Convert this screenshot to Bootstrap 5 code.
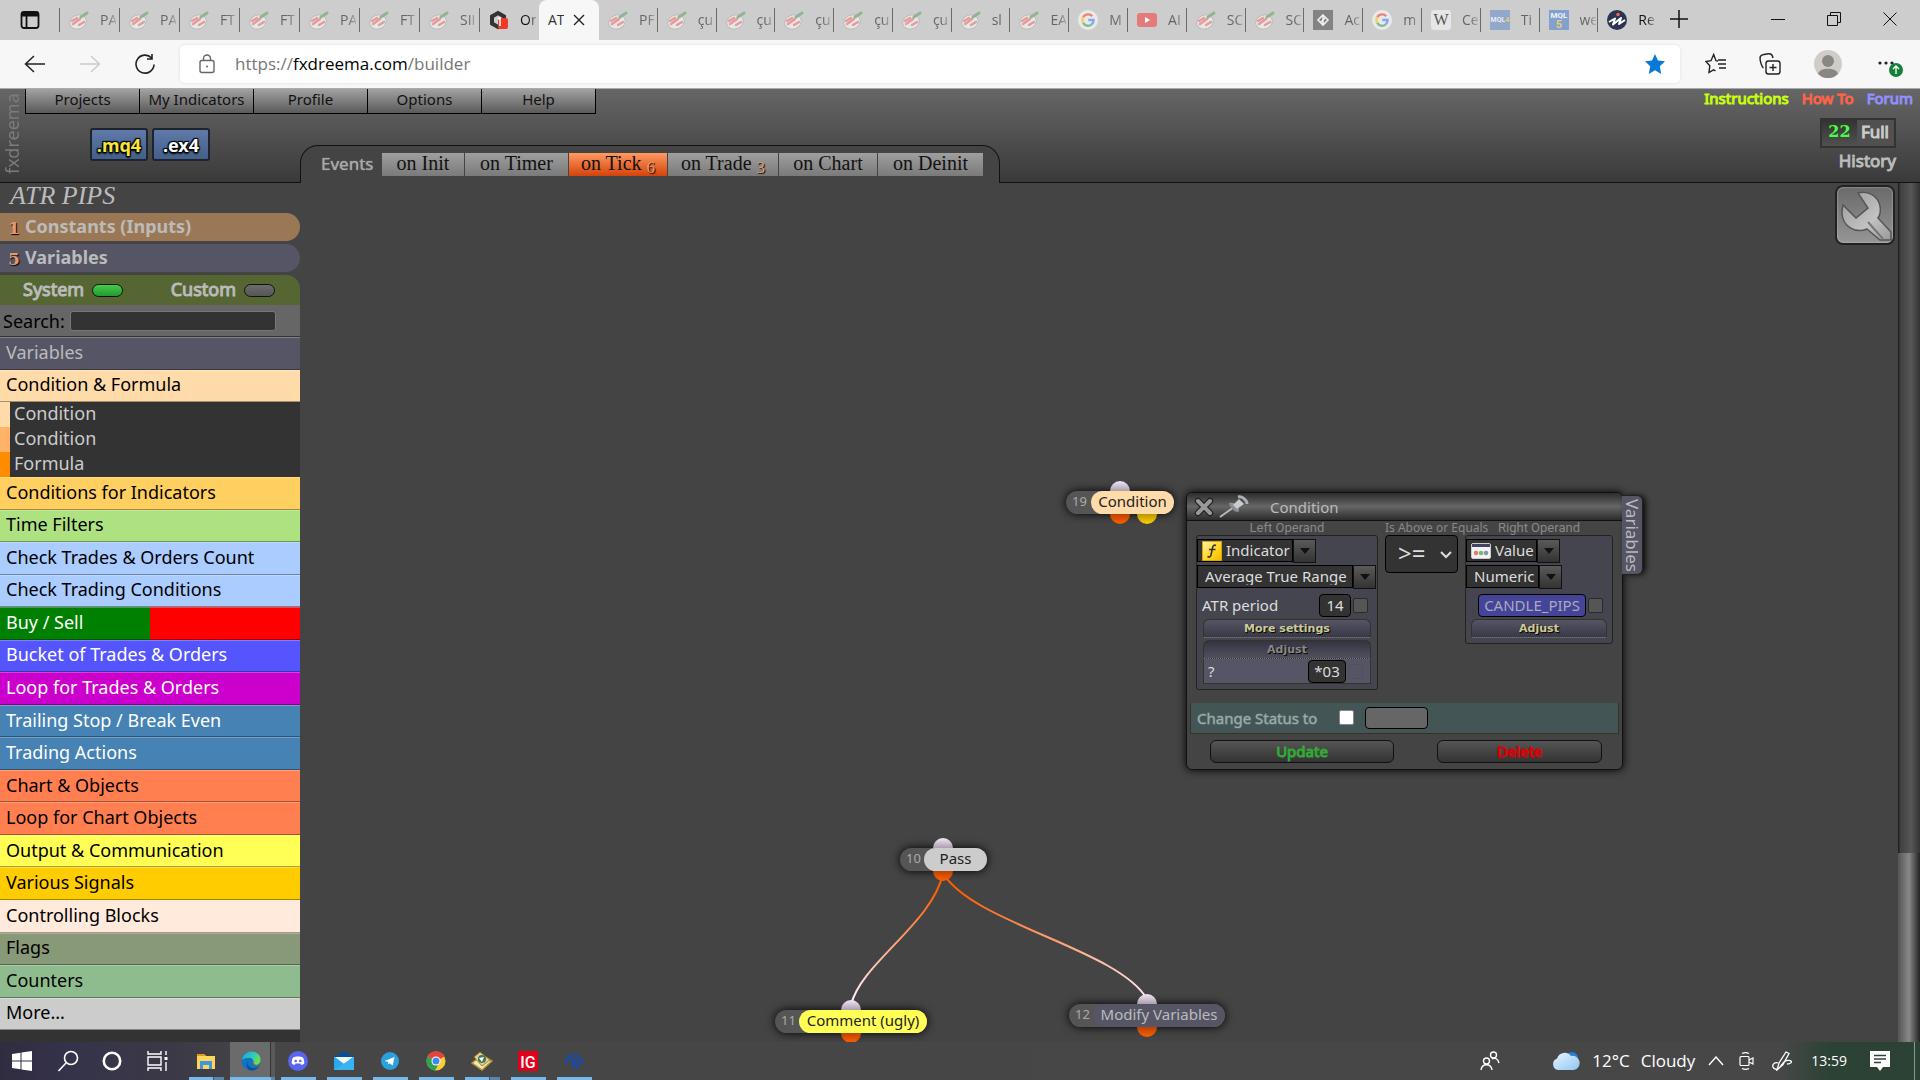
<!DOCTYPE html>
<html lang="en">
<head>
<meta charset="utf-8">
<meta name="viewport" content="width=device-width, initial-scale=1">
<title>fxDreema builder</title>
<link href="https://cdn.jsdelivr.net/npm/bootstrap@5.3.0/dist/css/bootstrap.min.css" rel="stylesheet">
<style>
  body { font-family: "Noto Sans", sans-serif; font-size: 15px; line-height: 20px; background: #444; color: #ccc; }
  a { color: inherit; text-decoration: none; }
  button, input, select { font-family: inherit; }
  svg { flex: none; display: block; }
  .heavy { -webkit-text-stroke: 1px currentColor; }

  /* browser tabs */
  .strip { height: 40px; background: #cdcdcd; }
  .strip-lead { width: 59px; padding-left: 20px; }
  .btab { position: relative; min-width: 0; padding-left: 9px; gap: 11px; height: 24px; border-left: 1px solid #6b6b6b; font-family: "Open Sans", sans-serif; font-size: 14px; color: #666; }
  .btab span { width: 16px; overflow: hidden; white-space: nowrap; -webkit-mask-image: linear-gradient(90deg, #000 50%, rgba(0,0,0,.3)); }
  .btab.dark-txt { color: #111; }
  .pinned .btab { width: 60px; }
  .btab-live { width: 60px; height: 40px; padding-left: 9px; gap: 9px; background: #f7f7f7; border-radius: 8px 8px 0 0; font-family: "Open Sans", sans-serif; font-size: 14px; color: #333; }
  .btab-live span { width: 16px; overflow: hidden; white-space: nowrap; }
  .plain { background: none; border: 0; padding: 0; color: inherit; display: block; }
  .strip-tail { width: 264px; padding: 0 23px 2px 14px; color: #111; }
  .win-ctl { gap: 42px; }

  /* address row */
  .addr { height: 49px; background: #f7f7f7; border-bottom: 1px solid #aaa; padding-left: 24px; }
  .addr-nav { width: 156px; gap: 33px; color: #222; }
  .addr-box { height: 38px; background: #fff; border-radius: 5px; box-shadow: 0 0 3px #ddd; padding: 0 14px 0 18px; }
  .addr-url { font-family: "Open Sans", sans-serif; font-size: 17px; color: #767676; margin-left: 19px; }
  .addr-url b { font-weight: 400; color: #000; }
  .addr-tools { width: 240px; padding: 0 16px 0 25px; color: #222; }

  /* application header */
  .app-head { height: 94px; background: linear-gradient(#666, #3a3a3a); border-bottom: 1px solid #111; }
  .brand-v { writing-mode: vertical-rl; transform: rotate(180deg); width: 25px; height: 85px; font-size: 18px; line-height: 25px; color: #7b7b7b; }
  .menu-a { width: 114px; height: 25px; line-height: 20px; text-align: center; color: #111; background: linear-gradient(#a2a2a2, #5a5a5a); border-right: 1px solid #000; border-bottom: 1px solid #000; }
  .menu-row { border-left: 1px solid #000; margin-right: -1px; }
  .dl-zone { width: 275px; padding: 14px 0 0 65px; }
  .dl-btn { width: 58px; height: 33px; border: 2px solid #1d2430; border-radius: 3px; background: linear-gradient(#6079a9, #426089); font-weight: 700; font-size: 18px; line-height: 28px; padding: 0; color: #fff;
            text-shadow: 1px 1px 1px #000, -1px -1px 1px #000, 1px -1px 1px #000, -1px 1px 1px #000, 0 2px 2px #000; }
  .dl-btn.yel { color: #f7e43c; }
  .ev-bar { width: 700px; height: 38px; margin-bottom: -1px; background: #444; border: 1px solid #111; border-bottom: 0; border-radius: 18px 18px 0 0; padding: 7px 0 0 20px; }
  .ev-name { width: 61px; font-size: 17px; line-height: 21px; color: #aaa; text-shadow: 0 0 1px #aaa; }
  .ev-tab { height: 23px; margin-right: 1px; background: linear-gradient(#9f9f9f, #7a7a7a); color: #111; font-family: "Liberation Serif", serif; font-size: 20px; line-height: 21px; white-space: nowrap; text-align: center; }
  .ev-tab.live { background: linear-gradient(#ff9a62, #d4430a); }
  .ev-tab sub { font-size: 17px; color: #e09a70; text-shadow: 1px 1px 1px #000; bottom: -3px; line-height: 0; }
  .ev-init { width: 82px; } .ev-timer { width: 103px; } .ev-tick { width: 98px; } .ev-trade { width: 110px; } .ev-chart { width: 98px; } .ev-deinit { width: 105px; }
  .top-links { gap: 13px; font-size: 15px; line-height: 18px; padding-right: 7px; }
  .lk-lime { color: #c6ff10; } .lk-red { color: #ff6347; } .lk-blue { color: #9090ff; }
  .full-box { border: 2px solid #333; background: #505050; height: 30px; font-size: 17px; line-height: 23px; color: #ccc; }
  .full-box b { width: 35px; text-align: center; background: linear-gradient(#333, #505050); color: #4f4; font-family: "DejaVu Serif", serif; font-size: 16px; }
  .full-box span { padding: 0 5px 0 4px; }
  .hist { font-size: 17px; color: #bbb; line-height: 24px; padding-top: 1px; }

  /* block library */
  .side { width: 300px; background: #333; }
  .proj { height: 30px; background: #444; font-family: "Liberation Serif", serif; font-style: italic; font-size: 26px; line-height: 26px; color: #bbb; padding-left: 10px; }
  .side-gap { background: #444; padding-bottom: 3px; }
  .pill-row { height: 28px; border-radius: 0 14px 14px 0; font-weight: 700; font-size: 18px; line-height: 27px; color: #bbb; padding-left: 8px; gap: 6px; }
  .pill-row i { font: 700 17px/30px "DejaVu Serif", serif; width: 11px; color: #e09a70; text-shadow: 1px 1px 1px #000; }
  .bg-const { background: #9b7855; } .bg-var { background: #555566; }
  .lib-tabs { height: 30px; background: #556633; border-radius: 0 14px 0 0; padding: 0 25px 2px 23px; font-size: 18px; color: #bbb; }
  .lamp { width: 31px; height: 13px; margin: 3px 0 0 8px; border: 1px solid #111; border-radius: 7px; background: linear-gradient(#6c6c6c, #555); }
  .lamp.on { background: linear-gradient(#4c4, #293); }
  .find { height: 32px; background: #666; border-bottom: 1px solid #333; padding: 0 24px 0 3px; font-size: 18px; color: #000; gap: 5px; }
  .find input { height: 20px; border: 1px solid #777; border-radius: 3px; background: #333; color: #ccc; min-width: 0; }
  .lib-a { flex: 1 1 0; min-height: 0; display: flex; align-items: center; padding: 0 6px 3px; font-size: 18px; line-height: 24px; color: #000; border-bottom: 1px solid rgba(0,0,0,.35); border-top: 1px solid rgba(255,255,255,.25); }
  .lib-a.w { color: #fff; }
  .lib-s { height: 25px; line-height: 22px; font-size: 18px; color: #ccc; border-left: 10px solid; padding-left: 4px; }
  .s1 { border-color: #ffdbaa; } .s2 { border-color: #ffb366; } .s3 { border-color: #ff8c00; }
  .side-foot { height: 12px; }

  /* canvas */
  .board { background: #444; overflow: hidden; min-width: 0; }
  .wires { position: absolute; left: 0; top: 0; }
  .tool-btn { position: absolute; right: 25px; top: 2px; width: 60px; height: 60px; border: 2px solid #222; border-radius: 8px; padding: 0; background: linear-gradient(#6a6a6a, #969696); box-shadow: inset 0 0 2px #ccc; }
  .vbar { position: absolute; right: 0; top: 0; bottom: 0; width: 22px; background: linear-gradient(90deg, #222 0 1px, #404040 2px, #575757 60%, #333); }
  .vbar i { position: absolute; left: 0; right: 0; top: 670px; bottom: 0; background: linear-gradient(90deg, #555, #888 50%, #222); }
  .node { position: absolute; height: 23px; border-radius: 12px; background: #555; box-shadow: 0 0 10px #000; padding-left: 6px; line-height: 21px; font-size: 13px; color: #aaa; }
  .node b { position: relative; font-weight: 400; font-size: 15px; height: 23px; margin-left: 4px; border-radius: 12px; background: #ccc; color: #222; text-align: center; }
  .node span { width: 14px; }
  .port { position: absolute; width: 20px; height: 10px; }
  .port.in { top: -10px; border-radius: 10px 10px 0 0; background: linear-gradient(#f4e4f8, #a9a0ac); }
  .port.out { bottom: -10px; border-radius: 0 0 10px 10px; background: linear-gradient(#b84300, #ff5f00); }
  .port.alt { background: linear-gradient(#b89600, #ffd000); }
  #n19 { left: 766px; top: 308px; } #n19 b { width: 83px; margin-left: 5px; background: #ffdbaa; } #n19 .port { left: 44px; } #n19 .alt { left: 71px; }
  #n10 { left: 600px; top: 665px; } #n10 b { width: 63px; } #n10 .port { left: 33px; }
  #n11 { left: 475px; top: 827px; } #n11 b { width: 128px; background: #ffff55; } #n11 .port { left: 66px; }
  #n12 { left: 769px; top: 821px; } #n12 b { width: 132px; background: #555566; color: #bbb; } #n12 .port { left: 68px; }

  /* block settings window */
  .dlg { position: absolute; left: 886px; top: 309px; width: 437px; background: #444; border: 1px solid #111; border-radius: 6px; box-shadow: 0 0 8px #000; }
  .dlg-head { height: 28px; border-bottom: 1px solid #111; border-radius: 6px 6px 0 0; background: linear-gradient(#2c2c2c, #666 50%, #2c2c2c); padding-left: 7px; }
  .dlg-title { margin-left: 20px; color: #bbb; }
  .dlg-tab { position: absolute; left: 435px; top: 2px; width: 21px; height: 80px; border: 1px solid #222; border-left: 0; border-radius: 0 6px 6px 0; background: #555566; box-shadow: 3px 0 6px -1px #000; writing-mode: vertical-rl; font-size: 17px; line-height: 18px; color: #bbb; padding: 0; text-align: center; }
  .dlg-cols { padding: 0 9px; }
  .cap { font-size: 12px; line-height: 14px; height: 14px; color: #888; text-align: center; white-space: nowrap; }
  .cap.nar { font-family: Roboto, sans-serif; font-size: 13px; }
  .opnd { border: 1px solid #222; border-radius: 3px; background: #454550; padding-top: 3px; }
  .w-l { width: 182px; } .w-r { width: 148px; }
  .op-l { height: 155px; } .op-r { height: 109px; }
  .op-mid { width: 87px; padding-left: 7px; }
  .cmb { height: 24px; margin-bottom: 2px; }
  .cmb-box { height: 23px; background: #333; border: 1px solid #000; gap: 4px; padding-left: 4px; }
  .cmb select { appearance: none; background: transparent; border: 0; color: #ddd; font-size: 15px; line-height: 18px; padding: 0 0 2px; height: 21px; }
  .cmb-arr { width: 23px; height: 24px; border: 1px solid #111; background: linear-gradient(#5a5a5a, #333); display: flex; align-items: center; justify-content: center; }
  .cmb-arr::before { content: ""; border: 5px solid transparent; border-top: 6px solid #111; border-bottom: 0; }
  .sel-ind { width: 66px; } .sel-atr { width: 150px; } .sel-val { width: 41px; } .sel-num { width: 67px; }
  .cmb .sel-atr, .cmb .sel-num { padding-left: 3px; }
  .fld { border: 1px solid #000; border-radius: 4px; background: #333; color: #ddd; height: 23px; padding: 0 0 1px; font-size: 15px; text-align: center; }
  .fld-s { width: 32px; } .fld-m { width: 38px; } .fld-l { width: 108px; background: #444499; color: #aab; }
  .chk { appearance: none; width: 15px; height: 15px; border: 1px solid #2a2a2a; border-radius: 2px; background: #555; margin: 0; }
  .chk.dim { border-color: #505060; background: #555566; }
  .chk.lit { background: #fff; border-color: #888; }
  .p-row { height: 28px; padding: 0 9px 0 5px; gap: 2px; color: #ddd; }
  .adj { display: block; width: 168px; margin-left: 6px; height: 19px; border: 1px solid #333326; border-bottom: 1px dotted #776; border-radius: 6px 6px 0 0; background: linear-gradient(#555566, #383846); color: #cc9; font: 700 11px/17px "DejaVu Sans", sans-serif; text-shadow: 1px 1px 1px #000; padding: 0; }
  .adj.open { margin-top: 2px; background: linear-gradient(#333342, #50505f); color: #888; }
  .adj.short { width: 136px; margin-left: 5px; }
  .adj-body { width: 168px; margin-left: 6px; height: 25px; border: 1px solid #333326; border-top: 0; background: #555566; padding: 0 7px 0 4px; gap: 2px; color: #ddd; }
  .cmp { width: 73px; height: 38px; border: 1px solid #000; border-radius: 4px; background: #333; color: #ddd; position: relative; }
  .cmp select { appearance: none; width: 100%; height: 34px; background: transparent; border: 0; color: inherit; font-size: 24px; line-height: 32px; padding: 0 0 0 12px; }
  .cmp svg { position: absolute; right: 4px; top: 14px; pointer-events: none; }
  .st-row { height: 31px; margin: 13px 3px 6px; background: #445555; border: 1px solid #333326; border-top: 0; padding: 0 0 1px 6px; color: #9aadab; }
  .st-row label { width: 142px; -webkit-text-stroke: 1px rgba(154,173,171,.5); }
  .st-row input[type=text] { width: 63px; height: 22px; background: #666; margin-left: 11px; }
  .dlg-foot { padding: 0 20px 6px 23px; }
  .act { height: 23px; border: 1px solid #111; border-radius: 6px; background: linear-gradient(#555, #333); font-size: 15px; line-height: 18px; padding: 0 0 2px; }
  .act.go { width: 184px; color: #3a3; } .act.del { width: 165px; color: #d00; }

  /* task bar */
  .tbar { height: 38px; color: #fff; background: linear-gradient(90deg, #302c40 0, #34324a 60px, #3c3a46 180px, #464646 260px, #474747 1780px, #2c4234 1830px, #2c4234); padding-left: 12px; }
  .tb { width: 45px; height: 38px; display: flex; align-items: center; justify-content: center; position: relative; }
  .tb-run { width: 46px; }
  .tb-first { margin-left: -9px; }
  .tb-run::after { content: ""; position: absolute; left: 6px; right: 5px; bottom: 0; height: 3px; background: #76b9ed; }
  .tb-multi::after { background: linear-gradient(90deg, #76b9ed 24px, #456 24px 25px, #5a86ad 25px); }
  .tb-on { background: linear-gradient(90deg, transparent 0 1px, #6b6b6b 1px 41px, #333 41px 42px, #5a5a5a 42px 46px); padding-right: 2px; }
  .tb-on::after { left: 1px; right: 0; background: linear-gradient(90deg, #76b9ed 41px, #5a86ad 41px); }
  .tray { font-family: "Open Sans", sans-serif; font-size: 17px; height: 38px; padding-right: 5px; }
  .tray .sm { font-size: 14px; margin-left: 19px; }
  .t-temp { margin-left: 12px; } .t-sky { margin-left: 11px; }
  .desk { width: 1px; height: 38px; background: #8b988f; margin-left: 24px; }
</style>
</head>
<body class="vh-100 overflow-hidden d-flex flex-column">

<svg width="0" height="0" class="position-absolute" aria-hidden="true">
  <defs>
    <symbol id="fx" viewBox="0 0 20 20"><ellipse cx="9" cy="12" rx="8.5" ry="7" fill="#e6e6e6" stroke="#b5b5b5" stroke-width=".8" transform="rotate(-20 9 12)"/><path d="M3 11l5-3M4 14l7-5M10 15l5-3" stroke="#e69a9a" stroke-width="2.4" stroke-linecap="round"/><path d="M12 7l6-4" stroke="#92b492" stroke-width="3" stroke-linecap="round"/></symbol>
    <symbol id="goog" viewBox="0 0 20 20"><circle cx="10" cy="10" r="10" fill="#e9e9e9"/><g fill="none" stroke-width="2.4"><path d="M14.2 6.2A5.6 5.6 0 0 0 5.2 7.2" stroke="#e8837b"/><path d="M5.2 7.2a5.6 5.6 0 0 0 0 5.6" stroke="#f3cf68"/><path d="M5.2 12.8a5.6 5.6 0 0 0 8.2 1.8" stroke="#7fbf8e"/><path d="M13.4 14.6A5.6 5.6 0 0 0 15.6 10H10.3" stroke="#83a9ec"/></g></symbol>
  </defs>
</svg>

<header class="strip d-flex align-items-center" aria-label="Browser tabs">
  <div class="strip-lead"><svg width="20" height="20" viewBox="0 0 20 20" fill="none" stroke="#111" stroke-width="1.8"><rect x="1.5" y="2" width="17" height="16" rx="2.5"/><path d="M2 4.500h16" stroke-width="4"/><path d="M6.5 5v13"/></svg></div>
  <nav class="pinned d-flex">
    <a href="#" class="btab d-flex align-items-center"><svg width="20" height="20"><use href="#fx"/></svg><span>PA</span></a>
    <a href="#" class="btab d-flex align-items-center"><svg width="20" height="20"><use href="#fx"/></svg><span>PA</span></a>
    <a href="#" class="btab d-flex align-items-center"><svg width="20" height="20"><use href="#fx"/></svg><span>FT</span></a>
    <a href="#" class="btab d-flex align-items-center"><svg width="20" height="20"><use href="#fx"/></svg><span>FT</span></a>
    <a href="#" class="btab d-flex align-items-center"><svg width="20" height="20"><use href="#fx"/></svg><span>PA</span></a>
    <a href="#" class="btab d-flex align-items-center"><svg width="20" height="20"><use href="#fx"/></svg><span>FT</span></a>
    <a href="#" class="btab d-flex align-items-center"><svg width="20" height="20"><use href="#fx"/></svg><span>SII</span></a>
    <a href="#" class="btab dark-txt d-flex align-items-center"><svg width="20" height="20" viewBox="0 0 20 20"><path d="M9 3l6 3.500v7L9 17l-6-3.500v-7z" fill="none" stroke="#333" stroke-width="4"/><rect x="9" y="8" width="10" height="11" rx="2" fill="#f03a28"/><path d="M9 9l2-1v8" stroke="#fff" stroke-width="1.600" fill="none"/></svg><span>Or</span></a>
  </nav>
  <div class="btab-live d-flex align-items-center"><span>AT</span><button class="plain" aria-label="Close tab"><svg width="12" height="12" viewBox="0 0 12 12" stroke="#222" stroke-width="1.400"><path d="M1 1l10 10M11 1L1 11"/></svg></button></div>
  <nav class="d-flex flex-fill">
    <a href="#" class="btab flex-fill d-flex align-items-center border-0"><svg width="20" height="20"><use href="#fx"/></svg><span>PF</span></a>
    <a href="#" class="btab flex-fill d-flex align-items-center"><svg width="20" height="20"><use href="#fx"/></svg><span>çu</span></a>
    <a href="#" class="btab flex-fill d-flex align-items-center"><svg width="20" height="20"><use href="#fx"/></svg><span>çu</span></a>
    <a href="#" class="btab flex-fill d-flex align-items-center"><svg width="20" height="20"><use href="#fx"/></svg><span>çu</span></a>
    <a href="#" class="btab flex-fill d-flex align-items-center"><svg width="20" height="20"><use href="#fx"/></svg><span>çu</span></a>
    <a href="#" class="btab flex-fill d-flex align-items-center"><svg width="20" height="20"><use href="#fx"/></svg><span>çu</span></a>
    <a href="#" class="btab flex-fill d-flex align-items-center"><svg width="20" height="20"><use href="#fx"/></svg><span>sl</span></a>
    <a href="#" class="btab flex-fill d-flex align-items-center"><svg width="20" height="20"><use href="#fx"/></svg><span>EA</span></a>
    <a href="#" class="btab flex-fill d-flex align-items-center"><svg width="20" height="20"><use href="#goog"/></svg><span>M</span></a>
    <a href="#" class="btab flex-fill d-flex align-items-center"><svg width="20" height="20" viewBox="0 0 20 20"><rect y="3" width="20" height="14" rx="3" fill="#e47a7a"/><path d="M8 7l5 3-5 3z" fill="#fff"/></svg><span>AI</span></a>
    <a href="#" class="btab flex-fill d-flex align-items-center"><svg width="20" height="20"><use href="#fx"/></svg><span>SC</span></a>
    <a href="#" class="btab flex-fill d-flex align-items-center"><svg width="20" height="20"><use href="#fx"/></svg><span>SC</span></a>
    <a href="#" class="btab flex-fill d-flex align-items-center"><svg width="20" height="20" viewBox="0 0 20 20"><rect width="20" height="20" fill="#838383"/><path d="M10 5l5 5-5 5-5-5zM10 5v5l-2 2M10 15v-5l2-2" fill="none" stroke="#eee" stroke-width="1.600"/></svg><span>Ac</span></a>
    <a href="#" class="btab flex-fill d-flex align-items-center"><svg width="20" height="20"><use href="#goog"/></svg><span>m</span></a>
    <a href="#" class="btab flex-fill d-flex align-items-center"><svg width="20" height="20" viewBox="0 0 20 20"><rect width="20" height="20" rx="3" fill="#e6e6e6"/><text x="10" y="15" text-anchor="middle" font-family="Liberation Serif" font-size="16" fill="#555">W</text></svg><span>Ce</span></a>
    <a href="#" class="btab flex-fill d-flex align-items-center"><svg width="20" height="20" viewBox="0 0 20 20"><rect width="20" height="20" fill="#93a7c8"/><text x="10" y="12" text-anchor="middle" font-family="Roboto" font-weight="700" font-size="7" fill="#e8eef8">MQL<tspan fill="#e6cf70">4</tspan></text></svg><span>Ti</span></a>
    <a href="#" class="btab flex-fill d-flex align-items-center"><svg width="20" height="20" viewBox="0 0 20 20"><rect width="20" height="20" fill="#83a0cf"/><text x="10" y="8" text-anchor="middle" font-family="Roboto" font-weight="700" font-size="8" fill="#f2f5fb">MQL</text><text x="10" y="18" text-anchor="middle" font-family="Roboto" font-weight="700" font-size="11" fill="#e6cf70">5</text></svg><span>we</span></a>
    <a href="#" class="btab dark-txt flex-fill d-flex align-items-center"><svg width="20" height="20" viewBox="0 0 20 20"><circle cx="10" cy="10" r="10" fill="#2b3550"/><path d="M2 12l6-3.500-2 6L14 8l-2 6 6-4" fill="none" stroke="#fff" stroke-width="2" stroke-linejoin="round"/><circle cx="11" cy="4.500" r="1.700" fill="#f06a4a"/></svg><span>Re</span></a>
  </nav>
  <div class="strip-tail d-flex align-items-center justify-content-between">
    <button class="plain" aria-label="New tab"><svg width="18" height="18" viewBox="0 0 18 18" stroke="#111" stroke-width="1.500"><path d="M9 0v18M0 9h18"/></svg></button>
    <div class="win-ctl d-flex align-items-center">
      <button class="plain" aria-label="Minimise"><svg width="14" height="14" viewBox="0 0 14 14" stroke="#111"><path d="M0 7.500h14"/></svg></button>
      <button class="plain" aria-label="Restore"><svg width="14" height="14" viewBox="0 0 14 14" stroke="#111" fill="none"><path d="M.5 3.500h10v10H.5zM3.500 3V.5h10v10H11"/></svg></button>
      <button class="plain" aria-label="Close"><svg width="14" height="14" viewBox="0 0 14 14" stroke="#111"><path d="M.5.5l13 13M13.500.5l-13 13"/></svg></button>
    </div>
  </div>
</header>

<div class="addr d-flex align-items-center">
  <div class="addr-nav d-flex align-items-center">
    <button class="plain" aria-label="Back"><svg width="22" height="20" viewBox="0 0 22 20" fill="none" stroke="#222" stroke-width="1.500"><path d="M21 10H2M10 2l-8.500 8 8.500 8"/></svg></button>
    <button class="plain" aria-label="Forward"><svg width="22" height="20" viewBox="0 0 22 20" fill="none" stroke="#ccc" stroke-width="1.500"><path d="M1 10h19M12 2l8.500 8-8.500 8"/></svg></button>
    <button class="plain" aria-label="Reload"><svg width="22" height="22" viewBox="0 0 22 22" fill="none" stroke="#222" stroke-width="1.600"><path d="M20 11.500A9 9 0 1 1 17.600 5M18 1v5h-5"/></svg></button>
  </div>
  <div class="addr-box flex-fill d-flex align-items-center">
    <svg width="18" height="20" viewBox="0 0 18 20" fill="none" stroke="#666" stroke-width="1.400"><rect x="2" y="6.500" width="14" height="12" rx="2"/><path d="M5.500 6.500V4.500a3.500 3.500 0 0 1 7 0v2"/><circle cx="9" cy="12.500" r="1" fill="#666" stroke="none"/></svg>
    <a href="#" class="addr-url flex-fill">https://<b>fxdreema.com</b>/builder</a>
    <svg width="22" height="22" viewBox="0 0 22 22" fill="#0a78d6"><path d="M11 1l3 6.500 7 .8-5.200 4.900L17.200 21 11 17.300 4.800 21l1.400-7.800L1 8.300l7-.8z"/></svg>
  </div>
  <div class="addr-tools d-flex align-items-center justify-content-between">
    <svg width="22" height="22" viewBox="0 0 22 22" fill="none" stroke="#222" stroke-width="1.400"><path d="M13 8l-2-.3L8.700 1.500 6 7.700l-5 .8 3.800 4.200L4 19.500l4.500-2.700 2 1M13 11h8M13 7h8M14 15h7"/></svg>
    <svg width="22" height="22" viewBox="0 0 22 22" fill="none" stroke="#222" stroke-width="1.400"><rect x="7" y="8" width="14" height="13" rx="2.500"/><path d="M14 11v7M10.500 14.500h7M4.500 15C3 14.500 1 8 1 5s2-3 4-3.500 5-1 6.500-.5 2 1.500 2.500 4"/></svg>
    <svg width="28" height="28" viewBox="0 0 28 28"><circle cx="14" cy="14" r="14" fill="#d0cdc9"/><circle cx="14" cy="11" r="6" fill="#8a8682"/><path d="M4 24c1-7 19-7 20 0a14 14 0 0 1-20 0z" fill="#8a8682"/></svg>
    <svg width="30" height="28" viewBox="0 0 30 28"><g fill="#222"><circle cx="6" cy="13" r="1.600"/><circle cx="12" cy="13" r="1.600"/><circle cx="18" cy="13" r="1.600"/></g><circle cx="22" cy="20" r="7" fill="#178038"/><path d="M22 24v-8M19 19l3-3 3 3" stroke="#fff" stroke-width="1.300" fill="none"/></svg>
  </div>
</div>

<div class="app-head d-flex">
  <div class="brand-v">fxdreema</div>
  <div class="d-flex flex-column flex-fill">
    <div class="d-flex justify-content-between align-items-start">
      <nav class="menu-row d-flex">
        <a href="#" class="menu-a">Projects</a><a href="#" class="menu-a">My Indicators</a><a href="#" class="menu-a">Profile</a><a href="#" class="menu-a">Options</a><a href="#" class="menu-a">Help</a>
      </nav>
      <div class="top-links d-flex"><a href="#" class="heavy lk-lime">Instructions</a><a href="#" class="heavy lk-red">How To</a><a href="#" class="heavy lk-blue">Forum</a></div>
    </div>
    <div class="d-flex flex-fill justify-content-between">
      <div class="d-flex">
        <div class="dl-zone d-flex gap-1">
          <button class="dl-btn yel">.mq4</button><button class="dl-btn">.ex4</button>
        </div>
        <nav class="ev-bar d-flex align-self-end align-items-start">
          <span class="ev-name">Events</span>
          <a href="#" class="ev-tab ev-init">on Init</a><a href="#" class="ev-tab ev-timer">on Timer</a><a href="#" class="ev-tab ev-tick live">on Tick <sub>6</sub></a><a href="#" class="ev-tab ev-trade">on Trade <sub>3</sub></a><a href="#" class="ev-tab ev-chart">on Chart</a><a href="#" class="ev-tab ev-deinit">on Deinit</a>
        </nav>
      </div>
      <div class="d-flex flex-column align-items-end pt-1 pe-4">
        <a href="#" class="full-box d-flex"><b>22</b><span class="heavy">Full</span></a>
        <a href="#" class="hist heavy">History</a>
      </div>
    </div>
  </div>
</div>

<main class="d-flex flex-fill overflow-hidden">
  <aside class="side d-flex flex-column flex-shrink-0">
    <div class="proj">ATR PIPS</div>
    <div class="side-gap"><a href="#" class="pill-row bg-const d-flex"><i>1</i>Constants (Inputs)</a></div>
    <div class="side-gap"><a href="#" class="pill-row bg-var d-flex"><i>5</i>Variables</a></div>
    <div style="background:#444"><div class="lib-tabs d-flex justify-content-between align-items-center">
      <button class="plain d-flex align-items-center"><span class="heavy">System</span><span class="lamp on"></span></button>
      <button class="plain d-flex align-items-center"><span class="heavy">Custom</span><span class="lamp"></span></button>
    </div></div>
    <div class="find d-flex align-items-center"><label for="q">Search:</label><input id="q" type="text" class="flex-fill"></div>
    <nav class="d-flex flex-column flex-fill">
      <a href="#" class="lib-a" style="background:#555566;color:#bbb">Variables</a>
      <a href="#" class="lib-a" style="background:#ffdbaa">Condition &amp; Formula</a>
      <a href="#" class="lib-s s1">Condition</a>
      <a href="#" class="lib-s s2">Condition</a>
      <a href="#" class="lib-s s3">Formula</a>
      <a href="#" class="lib-a" style="background:#ffd060">Conditions for Indicators</a>
      <a href="#" class="lib-a" style="background:#aee280">Time Filters</a>
      <a href="#" class="lib-a" style="background:#aaccff">Check Trades &amp; Orders Count</a>
      <a href="#" class="lib-a" style="background:#aaccff">Check Trading Conditions</a>
      <a href="#" class="lib-a w" style="background:linear-gradient(90deg,#008000 50%,#f00 50%)">Buy / Sell</a>
      <a href="#" class="lib-a w" style="background:#5555ff">Bucket of Trades &amp; Orders</a>
      <a href="#" class="lib-a w" style="background:#cc00cc">Loop for Trades &amp; Orders</a>
      <a href="#" class="lib-a w" style="background:#4682b4">Trailing Stop / Break Even</a>
      <a href="#" class="lib-a w" style="background:#4682b4">Trading Actions</a>
      <a href="#" class="lib-a" style="background:#ff7f50">Chart &amp; Objects</a>
      <a href="#" class="lib-a" style="background:#ff7f50">Loop for Chart Objects</a>
      <a href="#" class="lib-a" style="background:#ffff55">Output &amp; Communication</a>
      <a href="#" class="lib-a" style="background:#ffcc00">Various Signals</a>
      <a href="#" class="lib-a" style="background:#ffeadb">Controlling Blocks</a>
      <a href="#" class="lib-a" style="background:#889977">Flags</a>
      <a href="#" class="lib-a" style="background:#8fbc8f">Counters</a>
      <a href="#" class="lib-a" style="background:#cccccc">More...</a>
    </nav>
    <div class="side-foot"></div>
  </aside>

  <section class="board flex-fill position-relative">
    <svg class="wires" width="1000" height="859" viewBox="0 0 1000 859" fill="none" stroke-width="2">
      <defs>
        <linearGradient id="wg" gradientUnits="userSpaceOnUse" x1="0" y1="710" x2="0" y2="815"><stop offset="0" stop-color="#ff5f00"/><stop offset="1" stop-color="#fdf0ff"/></linearGradient>
      </defs>
      <path d="M643 690C633 740 561 780 551 822" stroke="url(#wg)"/>
      <path d="M643 690C672 740 818 766 847 816" stroke="url(#wg)"/>
    </svg>

    <div class="node d-flex" id="n19"><i class="port in"></i><i class="port out"></i><i class="port out alt"></i><span>19</span><b>Condition</b></div>
    <div class="node d-flex" id="n10"><i class="port in"></i><i class="port out"></i><span>10</span><b>Pass</b></div>
    <div class="node d-flex" id="n11"><i class="port in"></i><i class="port out"></i><span>11</span><b>Comment (ugly)</b></div>
    <div class="node d-flex" id="n12"><i class="port in"></i><i class="port out"></i><span>12</span><b>Modify Variables</b></div>

    <form class="dlg" onsubmit="return false">
      <button type="button" class="dlg-tab">Variables</button>
      <div class="dlg-head d-flex align-items-center">
        <button type="button" class="plain" aria-label="Close"><svg width="20" height="20" viewBox="0 0 20 20" stroke-linecap="round"><path d="M4 4l12 12M16 4L4 16" stroke="#222" stroke-width="6.500"/><path d="M4 4l12 12M16 4L4 16" stroke="#999" stroke-width="4"/></svg></button>
        <button type="button" class="plain ms-1" aria-label="Pin"><svg width="32" height="24" viewBox="0 0 32 24"><path d="M2 22l14-10" stroke="#bbb" stroke-width="1.800"/><path d="M11 8c4-1 6 0 8 3s3 4 1 6c-2 0-4-1-6-3.500S11 10 11 8z" fill="#8b9095"/><path d="M15 10l6-6 5 5-7 5z" fill="#c6ccd0"/><path d="M20 2c4-1 9 3 9 7" stroke="#aab0b4" stroke-width="3" fill="none"/></svg></button>
        <span class="dlg-title">Condition</span>
      </div>
      <div class="dlg-cols d-flex">
        <div class="w-l">
          <div class="cap nar">Left Operand</div>
          <div class="opnd op-l">
            <div class="cmb d-flex"><span class="cmb-box d-flex align-items-center"><svg width="20" height="20" viewBox="0 0 20 20"><defs><linearGradient id="yg" x2="1" y2="1"><stop stop-color="#fff6b0"/><stop offset=".6" stop-color="#ffd21a"/><stop offset="1" stop-color="#f5b800"/></linearGradient></defs><rect x=".5" y=".5" width="19" height="19" fill="url(#yg)" stroke="#d9a400"/><path d="M14 4.500c-2-1-3 0-3.500 2.500L9 14c-.5 2-1.500 2.500-3.500 1.500M7 8.500h6.500" fill="none" stroke="#333" stroke-width="1.600"/></svg><select class="sel-ind" aria-label="Left operand type"><option>Indicator</option></select></span><span class="cmb-arr"></span></div>
            <div class="cmb d-flex"><span class="cmb-box d-flex align-items-center"><select class="sel-atr" aria-label="Indicator"><option>Average True Range</option></select></span><span class="cmb-arr"></span></div>
            <div class="p-row d-flex align-items-center"><label class="flex-fill" for="per">ATR period</label><input class="fld fld-s" id="per" type="text" value="14"><input type="checkbox" class="chk" aria-label="Optimise period"></div>
            <button type="button" class="adj">More settings</button>
            <button type="button" class="adj open">Adjust</button>
            <div class="adj-body d-flex align-items-center"><label class="flex-fill" for="mul">?</label><input class="fld fld-m" id="mul" type="text" value="*03"><input type="checkbox" class="chk dim" aria-label="Optimise adjust"></div>
          </div>
        </div>
        <div class="op-mid">
          <div class="cap text-start">Is Above or Equals</div>
          <div class="cmp"><select aria-label="Comparison"><option>&gt;=</option></select><svg width="14" height="10" viewBox="0 0 14 10" fill="none" stroke="#ddd" stroke-width="2"><path d="M2 2l5 5 5-5"/></svg></div>
        </div>
        <div class="w-r">
          <div class="cap nar">Right Operand</div>
          <div class="opnd op-r">
            <div class="cmb d-flex"><span class="cmb-box d-flex align-items-center"><svg width="20" height="16" viewBox="0 0 20 16"><rect x=".5" y=".5" width="19" height="15" rx="1.500" fill="#f4f4f4" stroke="#ccc"/><path d="M1 2.500h18" stroke="#446" stroke-width="3"/><circle cx="5" cy="10" r="2.300" fill="#e87a6a"/><circle cx="10" cy="10" r="2.300" fill="#7ab87a"/><circle cx="15" cy="10" r="2.300" fill="#8a93b0"/></svg><select class="sel-val" aria-label="Right operand type"><option>Value</option></select></span><span class="cmb-arr"></span></div>
            <div class="cmb d-flex"><span class="cmb-box d-flex align-items-center"><select class="sel-num" aria-label="Value type"><option>Numeric</option></select></span><span class="cmb-arr"></span></div>
            <div class="p-row d-flex align-items-center justify-content-end"><input class="fld fld-l" type="text" value="CANDLE_PIPS" aria-label="Value"><input type="checkbox" class="chk" aria-label="Optimise value"></div>
            <button type="button" class="adj short">Adjust</button>
          </div>
        </div>
      </div>
      <div class="st-row d-flex align-items-center"><label for="chst">Change Status to</label><input type="checkbox" class="chk lit" id="chst"><input type="text" class="fld" aria-label="Status"></div>
      <div class="dlg-foot d-flex justify-content-between"><button type="button" class="act go heavy">Update</button><button type="button" class="act del heavy">Delete</button></div>
    </form>

    <button class="tool-btn" aria-label="Settings"><svg width="56" height="56" viewBox="0 0 56 56"><defs><linearGradient id="wr" x2="1" y2="1"><stop stop-color="#999"/><stop offset=".6" stop-color="#c2c2c2"/><stop offset="1" stop-color="#999"/></linearGradient></defs><path d="M21 6c10-3 20 3 22 13 1 5 0 9-2 12l13 14v8H43L30 42c-12 5-24-3-25-15 0-3 0-6 1-9l13 13 12-10z" fill="url(#wr)" stroke="#555" stroke-width="1.500"/><path d="M31 35l15 17" stroke="#777" stroke-width="2"/></svg></button>
    <div class="vbar"><i></i></div>
  </section>
</main>

<footer class="tbar d-flex align-items-center justify-content-between">
  <div class="d-flex">
    <a href="#" class="tb justify-content-start" aria-label="Start"><svg width="20" height="20" viewBox="0 0 20 20" fill="#fff"><path d="M0 3l8.500-1.300v7.800H0zM9.500 1.500L20 0v9.500H9.500zM0 10.500h8.500v7.800L0 17zM9.500 10.500H20V20L9.500 18.500z"/></svg></a>
    <a href="#" class="tb justify-content-start" aria-label="Search"><svg width="22" height="22" viewBox="0 0 22 22" fill="none" stroke="#fff" stroke-width="1.600"><circle cx="14" cy="8" r="6.500"/><path d="M9 13l-7.500 8"/></svg></a>
    <a href="#" class="tb justify-content-start" aria-label="Cortana"><svg width="20" height="20" viewBox="0 0 20 20" fill="none" stroke="#fff" stroke-width="2.600"><circle cx="10" cy="10" r="8.200"/></svg></a>
    <a href="#" class="tb justify-content-start" aria-label="Task view"><svg width="22" height="22" viewBox="0 0 22 22" fill="none" stroke="#fff" stroke-width="1.400"><path d="M1 1v3h13V1M1 21v-3h13v3M1 7h13v8H1zM19 1v4M19 12v9"/><path d="M17.500 7h3v3h-3z" fill="#fff" stroke="none"/></svg></a>
    <a href="#" class="tb tb-run tb-first tb-multi" aria-label="Explorer"><svg width="20" height="20" viewBox="0 0 20 20"><path d="M1 3h7l2 2h9v13H1z" fill="#ffd35c"/><path d="M1 3h7l2 2H1z" fill="#e09b1c"/><path d="M4 18v-8h12v8h-3v-4H7v4z" fill="#3f97dd"/></svg></a>
    <a href="#" class="tb tb-run tb-on" aria-label="Edge"><svg width="20" height="20" viewBox="0 0 22 22"><defs><linearGradient id="eg" x2="1" y2=".5"><stop stop-color="#1f9fe0"/><stop offset=".6" stop-color="#35c8b8"/><stop offset="1" stop-color="#6be04a"/></linearGradient></defs><circle cx="11" cy="11" r="10.500" fill="#1272c4"/><path d="M8 9c-3 4 0 10 6 10 3 0 5-1 6.500-3-2 4-6 6-10 5.500C6 20 5 13 8 9z" fill="#0b4f96"/><path d="M1 10C2 3 8 .5 11 .5c6 0 10.500 4 10.500 9 0 4-3 6-6 6s-3-1.500-2-3c1-2-1-5-4.500-5C5 7.500 2 9 1 10z" fill="url(#eg)"/><path d="M20.500 15.500c-3 2-9 1-8.500-3l2-1c-1 3 3 4.500 6.500 4z" fill="#6b6b6b"/></svg></a>
    <a href="#" class="tb tb-run" aria-label="Discord"><svg width="20" height="20" viewBox="0 0 20 20"><circle cx="10" cy="10" r="10" fill="#5865f2"/><path d="M5 6.500c2-1.500 8-1.500 10 0 1 2 1.500 4 1.200 6-1 1-1.700 1.200-2.700 1.500l-1-1.500h-5l-1 1.500c-1-.3-1.700-.5-2.700-1.500C3.500 10.500 4 8.500 5 6.500z" fill="#fff"/><circle cx="7.700" cy="10" r="1.300" fill="#5865f2"/><circle cx="12.300" cy="10" r="1.300" fill="#5865f2"/></svg></a>
    <a href="#" class="tb tb-run" aria-label="Mail"><svg width="20" height="20" viewBox="0 0 20 20"><path d="M0 6l10-6 10 6z" fill="#0a4f96"/><path d="M0 6h20v13H0z" fill="#2ba8ea"/><path d="M1 6h18l-9 7z" fill="#f4f8fc"/><path d="M0 19L20 6v13z" fill="#38b4f0"/></svg></a>
    <a href="#" class="tb tb-run" aria-label="Telegram"><svg width="18" height="18" viewBox="0 0 20 20"><circle cx="10" cy="10" r="10" fill="#2ba0da"/><path d="M4 10l11-4.500-2 9.500-3.500-2.500L8 14v-3z" fill="#fff"/></svg></a>
    <a href="#" class="tb tb-run" aria-label="Chrome"><svg width="20" height="20" viewBox="0 0 20 20"><circle cx="10" cy="10" r="9.500" fill="#fc3"/><path d="M10 10L1.500 5.500a9.500 9.500 0 0 1 17 0z" fill="#e1453a"/><path d="M10 10L1.500 5.500A9.500 9.500 0 0 0 9 19.500l4-7z" fill="#2da34f"/><circle cx="10" cy="10" r="4.500" fill="#fff"/><circle cx="10" cy="10" r="3.500" fill="#4285f4"/></svg></a>
    <a href="#" class="tb tb-run tb-multi" aria-label="MetaTrader"><svg width="22" height="20" viewBox="0 0 22 20"><path d="M1 12l10-8 10 6-10 9z" fill="#f0e6c0" stroke="#b8932c" stroke-width="1.500"/><path d="M3 6l6-5 10 8-8 6z" fill="#e8cf80" stroke="#8a6a20" stroke-width=".8"/><circle cx="11" cy="8" r="4" fill="#3b7a5a"/><path d="M8 7l5-1-2 5z" fill="#fff"/></svg></a>
    <a href="#" class="tb tb-run" aria-label="IG"><svg width="20" height="20" viewBox="0 0 20 20"><rect width="20" height="20" fill="#e3001b"/><text x="10" y="17" text-anchor="middle" font-family="Roboto" font-weight="500" font-size="16" fill="#fff">IG</text></svg></a>
    <a href="#" class="tb tb-run" aria-label="Terminal"><svg width="20" height="18" viewBox="0 0 20 18" fill="none" stroke="#1d4aa0" stroke-width="2.400"><path d="M9 1L1.500 9l2 2.500M9 5L5.500 9M9 8v8M11 17l7.500-8L11 2M10.500 7l2.500 2-3 4"/></svg></a>
  </div>
  <div class="tray d-flex align-items-center">
    <svg width="20" height="20" viewBox="0 0 20 20" fill="none" stroke="#fff" stroke-width="1.400"><circle cx="6.500" cy="10" r="3"/><path d="M1 19c1-7 10-7 11 0"/><circle cx="13.500" cy="4" r="3"/><path d="M12 8c3-2 6 0 7 4"/></svg>
    <svg width="28" height="20" viewBox="0 0 28 20" style="margin-left:52px"><defs><linearGradient id="cl" x2="1" y2="1"><stop stop-color="#e8f4ff"/><stop offset="1" stop-color="#8fc6f2"/></linearGradient></defs><circle cx="20" cy="7" r="6" fill="#2a7fd0"/><path d="M6 19a6 6 0 0 1-1-11.500A8 8 0 0 1 19 5a7 7 0 0 1 3 14z" fill="url(#cl)"/></svg>
    <span class="t-temp">12°C</span><span class="t-sky">Cloudy</span>
    <svg width="16" height="10" viewBox="0 0 16 10" fill="none" stroke="#fff" stroke-width="1.400" style="margin-left:13px"><path d="M1 9l7-8 7 8"/></svg>
    <svg width="16" height="18" viewBox="0 0 16 18" fill="none" stroke="#fff" stroke-width="1.200" style="margin-left:15px"><rect x="1" y="4.500" width="9" height="9" rx="1"/><path d="M10 8l4-2v6l-4-2M3 1.500c2-1 5-1 7 0M3 16.500c2 1 5 1 7 0"/></svg>
    <svg width="20" height="20" viewBox="0 0 20 20" fill="none" stroke="#fff" stroke-width="1.300" style="margin-left:17px"><path d="M5 19l2-7 7-11 3 1.500-6 11zM6 12c-3-1-6 1-5 4s5 3 7 0l4-5c2-2 6-2 7-1s0 3-4 3"/></svg>
    <span class="sm">13:59</span>
    <svg width="20" height="20" viewBox="0 0 20 20" style="margin-left:23px"><path d="M0 0h20v16h-7l-3 4-3-4H0z" fill="#fff"/><path d="M4 4.500h12M4 8h12M4 11.500h7" stroke="#2c4234" stroke-width="1.300"/></svg>
    <span class="desk"></span>
  </div>
</footer>
<script src="https://cdn.jsdelivr.net/npm/bootstrap@5.3.0/dist/js/bootstrap.bundle.min.js"></script>
</body>
</html>
